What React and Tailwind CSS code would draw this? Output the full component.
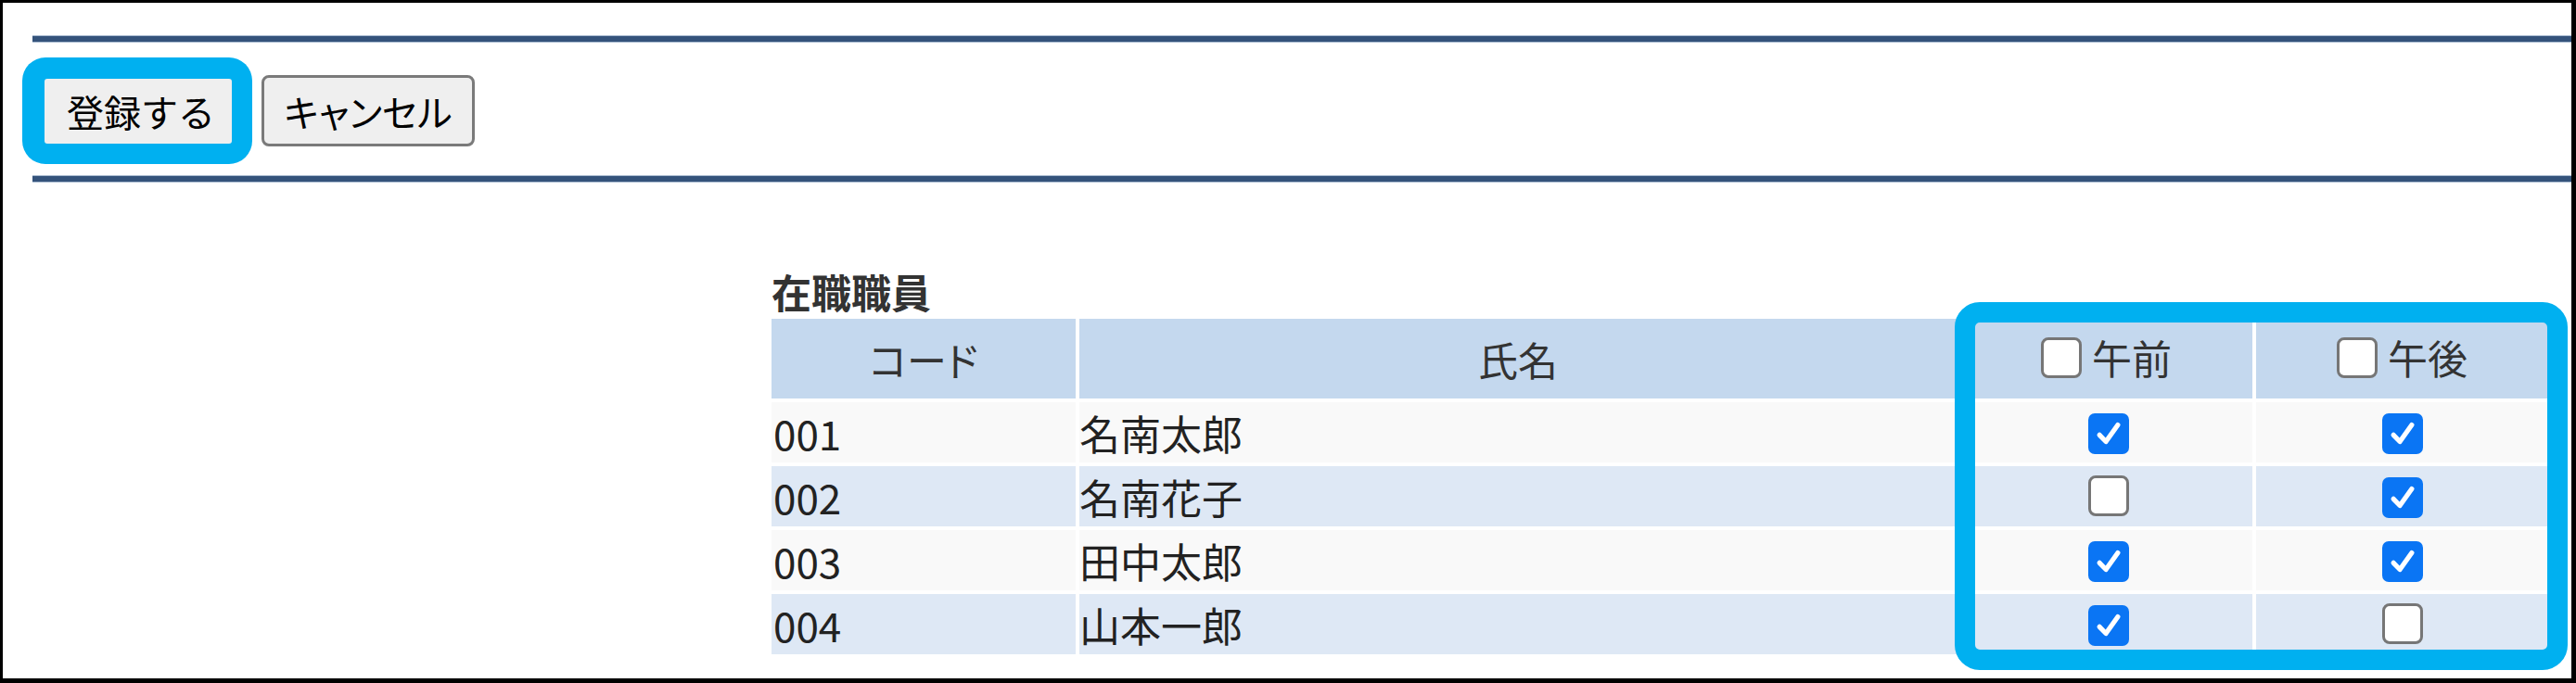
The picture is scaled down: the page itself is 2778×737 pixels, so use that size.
import React from "react";

const rows = [
  { code: "001", name: "名南太郎", am: true, pm: true },
  { code: "002", name: "名南花子", am: false, pm: true },
  { code: "003", name: "田中太郎", am: true, pm: true },
  { code: "004", name: "山本一郎", am: true, pm: false },
];

function Box({ checked }) {
  if (checked) {
    return (
      <span className="inline-flex w-[44px] h-[44px] rounded-[7px] bg-[#0a75f4] items-center justify-center align-middle">
        <svg viewBox="0 0 16 16" className="w-[36px] h-[36px]">
          <path d="M3.6 8.6 L6.7 11.8 L12.4 3.8" fill="none" stroke="#ffffff" strokeWidth="2.3" strokeLinecap="round" strokeLinejoin="round" />
        </svg>
      </span>
    );
  }
  return (
    <span className="inline-block w-[44px] h-[44px] rounded-[8px] bg-white border-[3px] border-[#767676] align-middle" />
  );
}

function Line() {
  return (
    <div className="ml-[11px] h-[8px] border-y-[1px] border-y-[#a9bbd0] bg-[#34537b]" />
  );
}

export default function App() {
  return (
    <div className="w-[2778px] h-[737px] bg-white border-l-[3px] border-t-[3px] border-r-[5px] border-b-[5px] border-black pl-[21px] font-['Noto_Sans_CJK_JP','Noto_Sans',sans-serif] text-[#222]">
      <div className="mt-[35px]">
        <Line />
      </div>
      <div className="mt-[16px] flex items-center">
        <div className="w-[248px] h-[115px] rounded-[25px] bg-[#00b0f0] pt-[23px] pl-[24px]">
          <div className="w-[202px] h-[70px] rounded-[3px] bg-[#efefef] pl-[24px] flex items-center text-[40px] leading-none text-black">
            登録する
          </div>
        </div>
        <div className="ml-[10px] w-[230px] h-[77px] rounded-[8px] border-[3px] border-[#7a7a7a] bg-[#efefef] flex items-center justify-center text-[40px] leading-none text-black [font-feature-settings:'palt']">
          キャンセル
        </div>
      </div>
      <div className="mt-[12px]">
        <Line />
      </div>
      <div className="ml-[804px] mt-[91px]">
        <div className="h-[52px] flex items-center pl-[4px] text-[43px] font-bold leading-none text-[#333]">
          在職職員
        </div>
        <div className="relative">
          <table className="border-separate border-spacing-[4px] w-[1924px] text-[43px] leading-none">
            <thead>
              <tr className="h-[86px] bg-[#c4d8ee] text-[#333]">
                <th className="w-[328px] font-normal text-center [font-feature-settings:'palt']">コード</th>
                <th className="w-[946px] font-normal text-center">氏名</th>
                <th className="w-[315px] font-normal text-center">
                  <span className="inline-flex items-center gap-[11px]">
                    <Box checked={false} />
                    <span>午前</span>
                  </span>
                </th>
                <th className="w-[315px] font-normal text-center">
                  <span className="inline-flex items-center gap-[11px]">
                    <Box checked={false} />
                    <span>午後</span>
                  </span>
                </th>
              </tr>
            </thead>
            <tbody>
              {rows.map((r, i) => (
                <tr key={r.code} className={"h-[65px] " + (i % 2 === 0 ? "bg-[#f9f9f9]" : "bg-[#dee8f5]")}>
                  <td className="px-[2px] text-[44px]">{r.code}</td>
                  <td className="px-0 text-[44px]">{r.name}</td>
                  <td className="text-center">
                    <span className="inline-flex pt-[2px] pl-[5px]"><Box checked={r.am} /></span>
                  </td>
                  <td className="text-center">
                    <span className="inline-flex pt-[2px]"><Box checked={r.pm} /></span>
                  </td>
                </tr>
              ))}
            </tbody>
          </table>
          <div className="absolute left-[1280px] top-[-14px] w-[661px] h-[397px] rounded-[27px] border-[22px] border-[#00b0f0]" />
        </div>
      </div>
    </div>
  );
}
